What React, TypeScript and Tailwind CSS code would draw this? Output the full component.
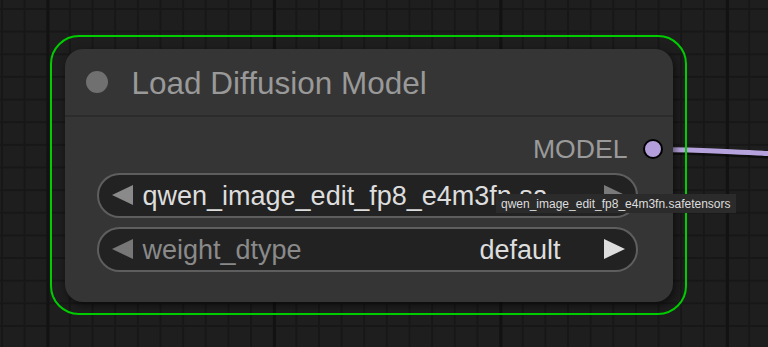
const font = "font-['Liberation_Sans',Arial,sans-serif]";

function Arrow({ dir, color }: { dir: "left" | "right"; color: string }) {
  return (
    <svg width="21" height="20" viewBox="0 0 21 20" className="shrink-0">
      <polygon
        points={dir === "left" ? "21,0 21,20 0,10" : "0,0 0,20 21,10"}
        fill={color}
      />
    </svg>
  );
}

function ComboWidget({
  label,
  value,
  leftColor,
  rightColor,
}: {
  label?: string;
  value: string;
  leftColor: string;
  rightColor: string;
}) {
  return (
    <div className="ml-[32px] flex h-[45px] w-[541px] items-center rounded-full border-2 border-[#5e5e5e] bg-[#222222] pl-[13px] pr-[11px] text-[27px]">
      <Arrow dir="left" color={leftColor} />
      {label ? (
        <>
          <span className="ml-[10px] pt-[3px] text-[#8a8a8a]">{label}</span>
          <span className="ml-auto mr-[43px] pt-[3px] text-[#dddddd]">{value}</span>
        </>
      ) : (
        <span className="ml-[10px] mr-[28px] min-w-0 flex-1 overflow-hidden whitespace-nowrap text-ellipsis pt-[3px] text-[#dddddd]">
          {value}
        </span>
      )}
      <Arrow dir="right" color={rightColor} />
    </div>
  );
}

export default function App() {
  return (
    <div
      className={`${font} relative h-[347px] w-[768px] overflow-hidden bg-[#1e1e1e] bg-[linear-gradient(to_right,#121212_2.5px,transparent_2.5px),linear-gradient(to_right,#171717_2px,transparent_2px),linear-gradient(to_bottom,#171717_2px,transparent_2px)] [background-size:226.5px_100%,22.65px_22.65px,22.65px_22.65px] [background-position:46.5px_0,1px_8px,1px_8px]`}
    >
      {/* link leaving the MODEL output */}
      <svg className="absolute inset-0" width="768" height="347">
        <path d="M652 151 C 700 151, 720 153, 770 155" stroke="#000" strokeOpacity="0.55" strokeWidth="7" fill="none" />
        <path d="M652 149.5 C 700 149.5, 720 151.5, 770 153.5" stroke="#b6a3de" strokeWidth="5" fill="none" />
      </svg>

      {/* selected node */}
      <div className="absolute left-[50px] top-[35px] rounded-[29px] border-[2.5px] border-[#00cc00] px-[12.5px] pb-[11.5px] pt-[11.5px]">
        <div className="flex h-[253px] w-[608px] flex-col rounded-[18px] bg-[#353535] shadow-[2px_3px_8px_rgba(0,0,0,0.55)]">
          <div className="flex h-[68px] items-center border-b-2 border-[#2b2b2b] pl-[21px]">
            <div className="h-[22px] w-[22px] rounded-full bg-[#707070]" />
            <span className="ml-[24px] pt-[4px] text-[31.5px] text-[#999999]">Load Diffusion Model</span>
          </div>

          <div className="mt-[18px] flex h-[28px] items-center justify-end gap-[15px] pr-[10px]">
            <span className="pt-[3px] text-[26.6px] text-[#9a9a9a]">MODEL</span>
            <div className="h-[20px] w-[20px] rounded-full border-2 border-black bg-[#b49fdc]" />
          </div>

          <div className="mt-[10px] flex flex-col gap-[9px]">
            <ComboWidget
              value="qwen_image_edit_fp8_e4m3fn.safetensors"
              leftColor="#8a8a8a"
              rightColor="#7a7a7a"
            />
            <ComboWidget
              label="weight_dtype"
              value="default"
              leftColor="#777777"
              rightColor="#dddddd"
            />
          </div>
        </div>
      </div>

      {/* hover tooltip */}
      <div className="absolute left-[496px] top-[194px] flex h-[19px] items-center bg-[#2b2b2b] px-[5px] text-[12px] text-[#dddddd]">
        qwen_image_edit_fp8_e4m3fn.safetensors
      </div>
    </div>
  );
}
